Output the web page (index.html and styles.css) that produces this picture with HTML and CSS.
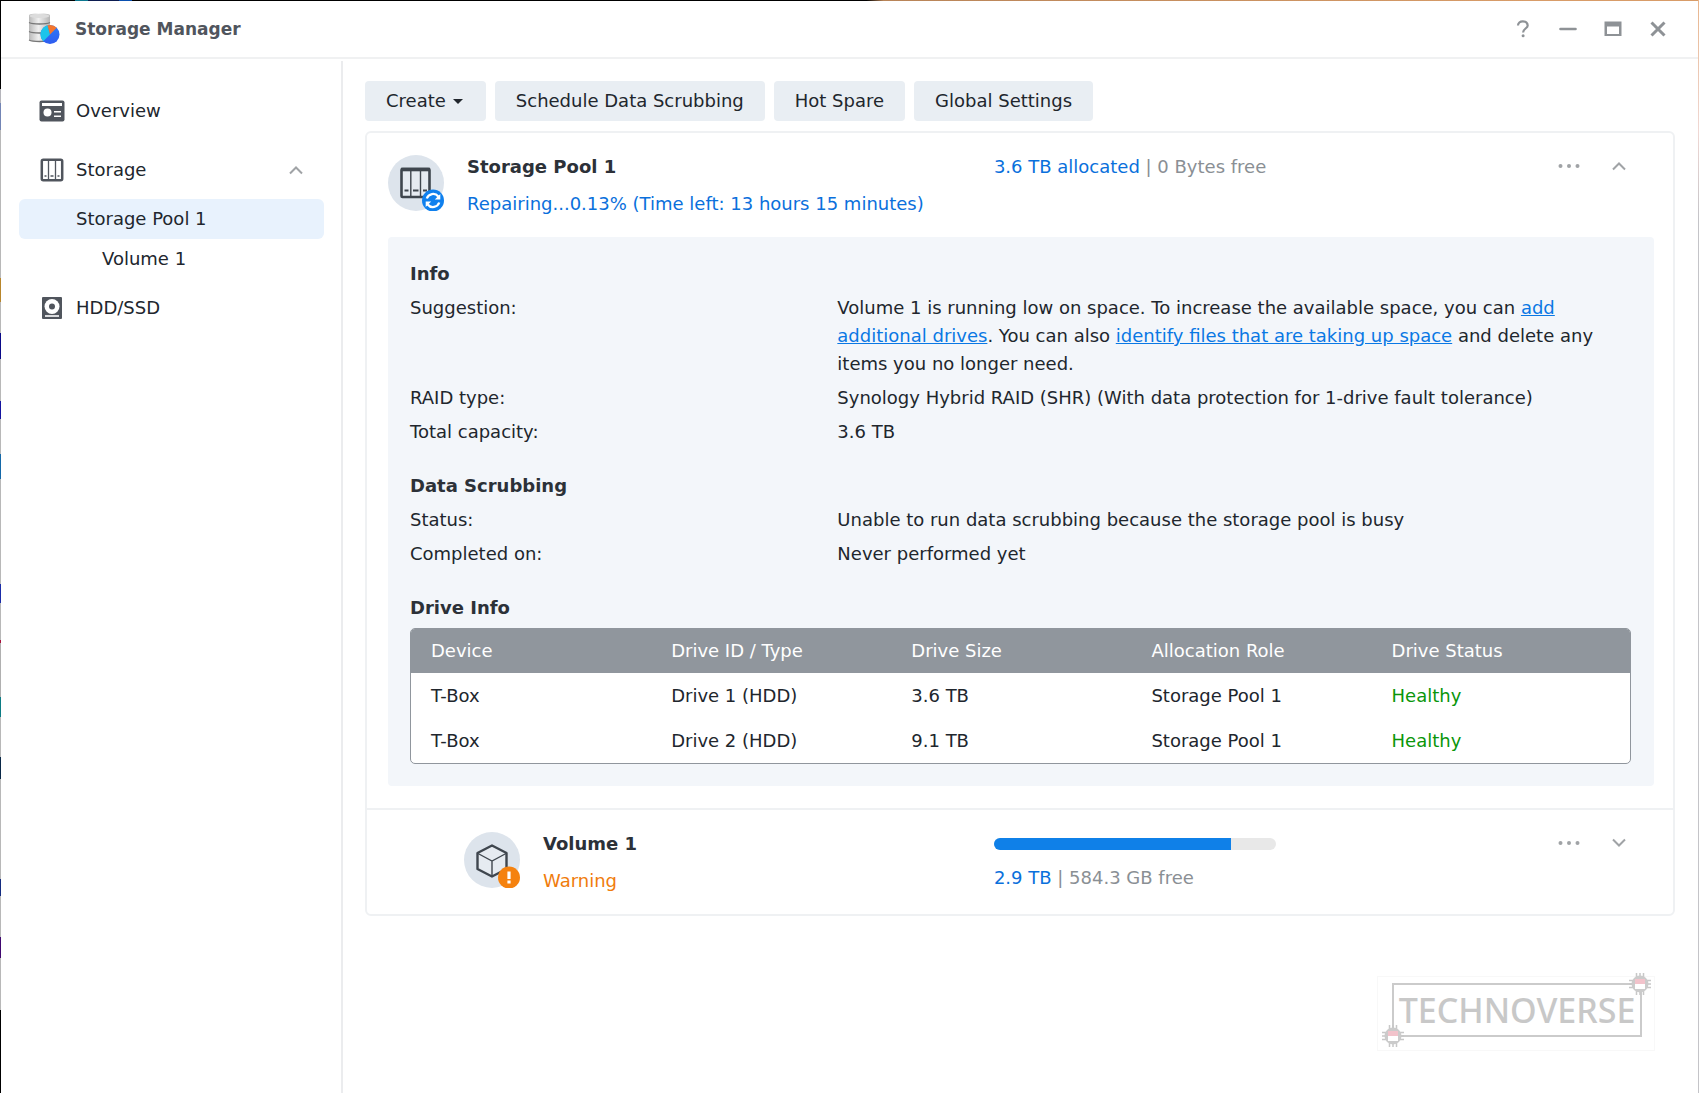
FILE: index.html
```html
<!DOCTYPE html>
<html lang="en">
<head>
<meta charset="utf-8">
<title>Storage Manager</title>
<link rel="stylesheet" href="styles.css">
</head>
<body>
<svg class="sprite" aria-hidden="true">
  <symbol id="up" viewBox="0 0 16 10"><path d="M2 8.500 8 2.500l6 6" fill="none" stroke="currentColor" stroke-width="2"/></symbol>
  <symbol id="down" viewBox="0 0 16 10"><path d="M2 1.500 8 7.500l6-6" fill="none" stroke="currentColor" stroke-width="2"/></symbol>
  <symbol id="dots" viewBox="0 0 22 6"><g fill="currentColor"><circle cx="2.500" cy="3" r="2"/><circle cx="11" cy="3" r="2"/><circle cx="19.500" cy="3" r="2"/></g></symbol>
  <symbol id="chip" viewBox="0 0 22 22">
    <path d="M7.500 0v22M11 0v22M14.500 0v22M0 7.500h22M0 11h22M0 14.500h22" stroke="#c8c8c8" stroke-width="1.500"/>
    <circle cx="11" cy="11" r="8.500" fill="#cbcbcb"/>
    <path d="M6 6h10v5H6z" fill="#f2c3cb"/><path d="M6 11h10v5H6z" fill="#fff"/>
  </symbol>
</svg>
<div class="window">
  <header class="titlebar">
    <svg class="app-icon" viewBox="0 0 32 32" aria-hidden="true">
      <defs><linearGradient id="metal"><stop offset="0" stop-color="#b9b9b9"/><stop offset=".45" stop-color="#efefef"/><stop offset="1" stop-color="#b4b4b4"/></linearGradient>
      <linearGradient id="pie" x2="0" y2="1"><stop offset="0" stop-color="#2c7bf6"/><stop offset="1" stop-color="#2f5cf0"/></linearGradient></defs>
      <path d="M1 2.500c0-1.500 4-2 10.500-2S22 1 22 2.500v24c0 1.500-4 2.500-10.500 2.500S1 28 1 26.500z" fill="url(#metal)"/>
      <ellipse cx="11.500" cy="3" rx="10" ry="2" fill="#dcdcdc"/>
      <path d="M1 9.500c4 2 17 2 21 0M1 18.500c4 2 17 2 21 0M1 27c4 2 17 2 21 0" fill="none" stroke="#777" stroke-width="1.300"/>
      <circle cx="22" cy="21.500" r="9.500" fill="url(#pie)"/>
      <path d="M22 21.500 15.300 28.200A9.500 9.500 0 0 1 19.500 12.300z" fill="#1cc4ea"/>
      <path d="M22 21.500 19.500 12.300A9.500 9.500 0 0 1 28.700 14.800z" fill="#f4762e"/>
    </svg>
    <h1 class="app-name">Storage Manager</h1>
    <div class="window-controls">
      <button type="button" aria-label="Help"><svg width="18" height="18" viewBox="0 0 18 18"><path d="M4 5.500C4 3 6 1.300 8.800 1.300s4.900 1.600 4.900 4.100c0 3-4.600 3.300-4.600 7" fill="none" stroke="currentColor" stroke-width="2.200"/><circle cx="9.100" cy="15.800" r="1.500" fill="currentColor"/></svg></button>
      <button type="button" aria-label="Minimize"><svg width="18" height="18" viewBox="0 0 18 18"><path d="M1.500 9h15" stroke="currentColor" stroke-width="2.600" stroke-linecap="round"/></svg></button>
      <button type="button" aria-label="Maximize"><svg width="18" height="18" viewBox="0 0 18 18"><path d="M.5 1.500h17v14.500H.5zM3 6.500v7.500h12V6.500z" fill="currentColor" fill-rule="evenodd"/></svg></button>
      <button type="button" aria-label="Close"><svg width="18" height="18" viewBox="0 0 18 18"><path d="m2.500 2.500 13 13m0-13-13 13" stroke="currentColor" stroke-width="3"/></svg></button>
    </div>
  </header>
  <div class="body">
    <nav class="sidebar">
      <a class="nav-item" href="#"><svg class="nav-icon" viewBox="0 0 26 26" aria-hidden="true"><rect x=".5" y="2.500" width="25" height="21" rx="2" fill="#50555d"/><path d="M3 5h20v3H3zM15 13h7v1.600h-7zM15 17.500h7v1.600h-7z" fill="#fff"/><circle cx="8.500" cy="14.500" r="4" fill="#fff"/></svg>Overview</a>
      <a class="nav-item" href="#"><svg class="nav-icon" viewBox="0 0 26 26" aria-hidden="true"><rect x="2.800" y="2.800" width="20.400" height="20.400" rx="1.500" fill="#fff" stroke="#50555d" stroke-width="2.500"/><path d="M9.500 3v20M16.500 3v20" stroke="#50555d" stroke-width="1.300"/><path d="M5.500 19h2M11.500 19h3M18.500 19h2" stroke="#50555d" stroke-width="1.500"/></svg>Storage<svg class="chevron nav-chevron" aria-hidden="true"><use href="#up"/></svg></a>
      <div class="subnav">
        <a class="nav-item nav-child selected" href="#">Storage Pool 1</a>
        <a class="nav-item nav-grandchild" href="#">Volume 1</a>
      </div>
      <a class="nav-item" href="#"><svg class="nav-icon" viewBox="0 0 26 26" aria-hidden="true"><rect x="3" y="2" width="20" height="22" rx="1" fill="#50555d"/><circle cx="13" cy="11.500" r="7.500" fill="#fff"/><circle cx="13" cy="11.500" r="3" fill="#50555d"/><path d="M6 21h14" stroke="#fff" stroke-width="1.600"/></svg>HDD/SSD</a>
    </nav>
    <main class="content">
      <div class="toolbar">
        <button type="button" class="btn">Create<span class="caret"></span></button>
        <button type="button" class="btn">Schedule Data Scrubbing</button>
        <button type="button" class="btn">Hot Spare</button>
        <button type="button" class="btn">Global Settings</button>
      </div>
      <div class="card">
        <section class="pool">
          <div class="item-head">
            <div class="item-main">
              <svg class="item-icon" viewBox="0 0 56 56" aria-hidden="true"><circle cx="28" cy="28" r="28" fill="#dde4ec"/><rect x="13.500" y="14" width="28" height="28" rx="1" fill="#e6ebf1" stroke="#3f464e" stroke-width="2.600"/><path d="M13 14.500h29" stroke="#3f464e" stroke-width="3.600"/><path d="M22.800 15v26M32.500 15v26" stroke="#3f464e" stroke-width="1.400"/><path d="M16.500 35.500h4M25 35.500h5.500M35 35.500h4" stroke="#3f464e" stroke-width="2.200"/><circle cx="45" cy="45.500" r="11" fill="#0f80ee"/><path d="M38.800 43.500a6.600 6.600 0 0 1 11.500-2M51.200 47.500a6.600 6.600 0 0 1-11.500 2" fill="none" stroke="#fff" stroke-width="2.300"/><path d="M52.300 39v5.500h-5.500zM37.700 52v-5.500h5.500z" fill="#fff"/></svg>
              <div>
                <h2 class="item-title">Storage Pool 1</h2>
                <p class="item-status info">Repairing...0.13% (Time left: 13 hours 15 minutes)</p>
              </div>
            </div>
            <p class="usage"><span class="info">3.6 TB allocated</span> | 0 Bytes free</p>
            <div class="item-actions">
              <button type="button" aria-label="More"><svg class="dots"><use href="#dots"/></svg></button>
              <button type="button" aria-label="Collapse"><svg class="chevron"><use href="#up"/></svg></button>
            </div>
          </div>
          <div class="panel">
            <h3 class="group-title">Info</h3>
            <dl class="facts">
              <dt>Suggestion:</dt><dd>Volume 1 is running low on space. To increase the available space, you can <a href="#">add additional drives</a>. You can also <a href="#">identify files that are taking up space</a> and delete any items you no longer need.</dd>
              <dt>RAID type:</dt><dd>Synology Hybrid RAID (SHR) (With data protection for 1-drive fault tolerance)</dd>
              <dt>Total capacity:</dt><dd>3.6 TB</dd>
            </dl>
            <h3 class="group-title">Data Scrubbing</h3>
            <dl class="facts">
              <dt>Status:</dt><dd>Unable to run data scrubbing because the storage pool is busy</dd>
              <dt>Completed on:</dt><dd>Never performed yet</dd>
            </dl>
            <h3 class="group-title">Drive Info</h3>
            <table class="drives">
              <thead><tr><th>Device</th><th>Drive ID / Type</th><th>Drive Size</th><th>Allocation Role</th><th>Drive Status</th></tr></thead>
              <tbody>
                <tr><td>T-Box</td><td>Drive 1 (HDD)</td><td>3.6 TB</td><td>Storage Pool 1</td><td class="healthy">Healthy</td></tr>
                <tr><td>T-Box</td><td>Drive 2 (HDD)</td><td>9.1 TB</td><td>Storage Pool 1</td><td class="healthy">Healthy</td></tr>
              </tbody>
            </table>
          </div>
        </section>
        <section class="volume">
          <div class="item-head">
            <div class="item-main nested">
              <svg class="item-icon" viewBox="0 0 56 56" aria-hidden="true"><circle cx="28" cy="28" r="28" fill="#dde4ec"/><path d="M28 13.500 42.500 21v16L28 44.500 13.500 37V21z" fill="#e6ebf1" stroke="#3f464e" stroke-width="2.400" stroke-linejoin="round"/><path d="M14 21.500 28 29l14-7.500M28 29v15" fill="none" stroke="#3f464e" stroke-width="1.400"/><circle cx="45" cy="45.500" r="11" fill="#f5820f"/><path d="M43.400 39.500h3.200v7.500h-3.200zM43.400 48.500h3.200v3h-3.200z" fill="#fff"/></svg>
              <div>
                <h2 class="item-title">Volume 1</h2>
                <p class="item-status warning">Warning</p>
              </div>
            </div>
            <div class="usage">
              <div class="bar"><div class="bar-fill" style="width:84%"></div></div>
              <p><span class="info">2.9 TB</span> | 584.3 GB free</p>
            </div>
            <div class="item-actions">
              <button type="button" aria-label="More"><svg class="dots"><use href="#dots"/></svg></button>
              <button type="button" aria-label="Expand"><svg class="chevron"><use href="#down"/></svg></button>
            </div>
          </div>
        </section>
      </div>
    </main>
  </div>
  <div class="watermark">
    <div class="watermark-frame">TECHNOVERSE</div>
    <svg class="chip chip-top"><use href="#chip"/></svg>
    <svg class="chip chip-bottom"><use href="#chip"/></svg>
  </div>
</div>
</body>
</html>
```
FILE: styles.css
```css
* { box-sizing: border-box; }
h1, h2, h3, p, dl, dd { margin: 0; }

/* The desktop behind the window shows as a thin line along its edges. */
body {
  margin: 0;
  padding: 1px 1px 0;
  min-height: 100vh;
  display: flex;
  color: #21262d;
  font: 18px/28px Verdana, "DejaVu Sans", sans-serif;
  background:
    linear-gradient(#000 0 89px, #b5b5bb 89px 103px, #7385b5 103px 130px, #b8b8b8 130px 278px, #b8862c 278px 302px, #b8b8b8 302px 333px, #0a0a88 333px 359px, #b8b8b8 359px 401px, #1414a0 401px 419px, #b8b8b8 419px 454px, #1468a8 454px 479px, #b8b8b8 479px 584px, #1a2ca8 584px 603px, #b8b8b8 603px 640px, #a8103c 640px 643px, #b0b0b0 643px 697px, #0c7c84 697px 717px, #b8b8b8 717px 757px, #0a2848 757px 779px, #b8b8b8 779px 879px, #142c80 879px 896px, #b8b8b8 896px 937px, #400870 937px 958px, #b8b8b8 958px 1010px, #000 1010px) left top / 1px 100% no-repeat,
    linear-gradient(#e8b58c, #f0d8d4 12%, #c4c4c8 20%) right top / 1px 100% no-repeat,
    linear-gradient(90deg, #000 0 75px, #0c7890 75px 88px, #0c1c50 88px 119px, #0a50b0 119px 132px, #000 132px 51%, #b88458 52%, #d89c68 90%) top / 100% 1px no-repeat,
    #fff;
}

button { border: 0; padding: 0; background: none; font: inherit; color: inherit; }
a { color: #0a78e4; }
.sprite { position: absolute; width: 0; height: 0; }
.info { color: #0a70dc; }
.warning { color: #f07c0c; }

.window {
  flex: 1;
  position: relative;
  display: flex;
  flex-direction: column;
  background: #fff;
  border-radius: 4px;
}

.titlebar {
  display: flex;
  align-items: center;
  height: 58px;
  padding: 0 18px 0 27px;
  border-bottom: 2px solid #f0f1f2;
}
.app-icon { width: 32px; height: 32px; }
.app-name {
  flex: 1;
  margin-left: 15px;
  font-size: 17px;
  line-height: 28px;
  color: #50555d;
}
.window-controls { display: flex; color: #8e9296; }
.window-controls button { width: 45px; height: 45px; display: grid; place-items: center; }

.body { flex: 1; display: flex; }

.sidebar {
  width: 342px;
  margin-top: 2px;
  padding: 30px 17px 0 18px;
  border-right: 2px solid #ebecee;
}
.nav-item {
  display: flex;
  align-items: center;
  height: 40px;
  padding-left: 20px;
  color: #21262d;
  text-decoration: none;
  border-radius: 6px;
}
.sidebar > .nav-item + .nav-item { margin-top: 19px; }
.nav-icon { width: 26px; height: 26px; margin-right: 11px; }
.chevron { width: 16px; height: 10px; color: #a0a3a6; }
.nav-chevron { margin: 0 20px 0 auto; }
.subnav { margin: 9px 0; }
.nav-child { padding-left: 57px; }
.nav-grandchild { padding-left: 83px; }
.selected { background: #e8f2fd; }

.content { flex: 1; padding: 22px 23px 0 22px; }

.toolbar { display: flex; gap: 9px; }
.btn {
  display: flex;
  align-items: center;
  height: 40px;
  padding: 0 21px;
  background: #e9eef3;
  border-radius: 4px;
}
.caret {
  margin: 0 2px 0 7px;
  border: 5px solid transparent;
  border-top-color: currentColor;
  border-bottom: 0;
}

.card {
  margin-top: 10px;
  border: 2px solid #eff1f3;
  border-radius: 6px;
}
.pool { padding-bottom: 22px; }
.volume { border-top: 2px solid #eff1f3; }
.item-head {
  display: grid;
  grid-template-columns: 48% 1fr auto;
  padding: 20px 0 19px;
}
.item-main { display: flex; gap: 23px; padding-left: 21px; white-space: nowrap; }
.nested { padding-left: 97px; }
.item-icon { width: 56px; height: 56px; margin-top: 2px; }
.item-title, .group-title { font-size: 18px; line-height: 28px; color: #2c3138; }
.item-status { margin-top: 9px; }
.usage { color: #8a8f94; }
.bar {
  width: 282px;
  height: 12px;
  margin: 8px 0 14px;
  border-radius: 6px;
  background: #e8e8e8;
  overflow: hidden;
}
.bar-fill { height: 100%; background: #0f80e8; }
.item-actions { display: flex; gap: 16px; padding-right: 37px; color: #a0a3a6; }
.item-actions button { height: 26px; width: 34px; display: grid; place-items: center; }
.dots { width: 22px; height: 6px; }

.panel {
  margin: 0 19px 0 21px;
  padding: 23px 23px 22px 22px;
  background: #f3f6fa;
  border-radius: 4px;
}
.facts {
  display: grid;
  grid-template-columns: 35% 1fr;
  row-gap: 6px;
  margin: 6px 0 26px;
}

.drives {
  width: 100%;
  margin-top: 6px;
  table-layout: fixed;
  border: 1px solid #90969d;
  border-radius: 5px;
  border-spacing: 0;
  background: #fff;
  overflow: hidden;
}
.drives th, .drives td {
  height: 45px;
  padding: 0 20px;
  text-align: left;
  font-weight: normal;
}
.drives th { height: 44px; width: 19.7%; background: #90969d; color: #fff; }
.drives th:last-child { width: auto; }
.drives .healthy { color: #0a960a; }

.watermark {
  position: absolute;
  right: 43px;
  bottom: 42px;
  padding: 6px 12px 13px 14px;
  border: 1px solid #f8f8f8;
}
.watermark-frame {
  width: 250px;
  height: 54px;
  border: 2px solid #cbcbcb;
  color: #c8c8c8;
  font: 500 34px/50px "Noto Sans", sans-serif;
  text-align: center;
}
.chip { position: absolute; width: 22px; height: 22px; }
.chip-top { right: 3px; top: -4px; }
.chip-bottom { left: 4px; bottom: 3px; }
```
